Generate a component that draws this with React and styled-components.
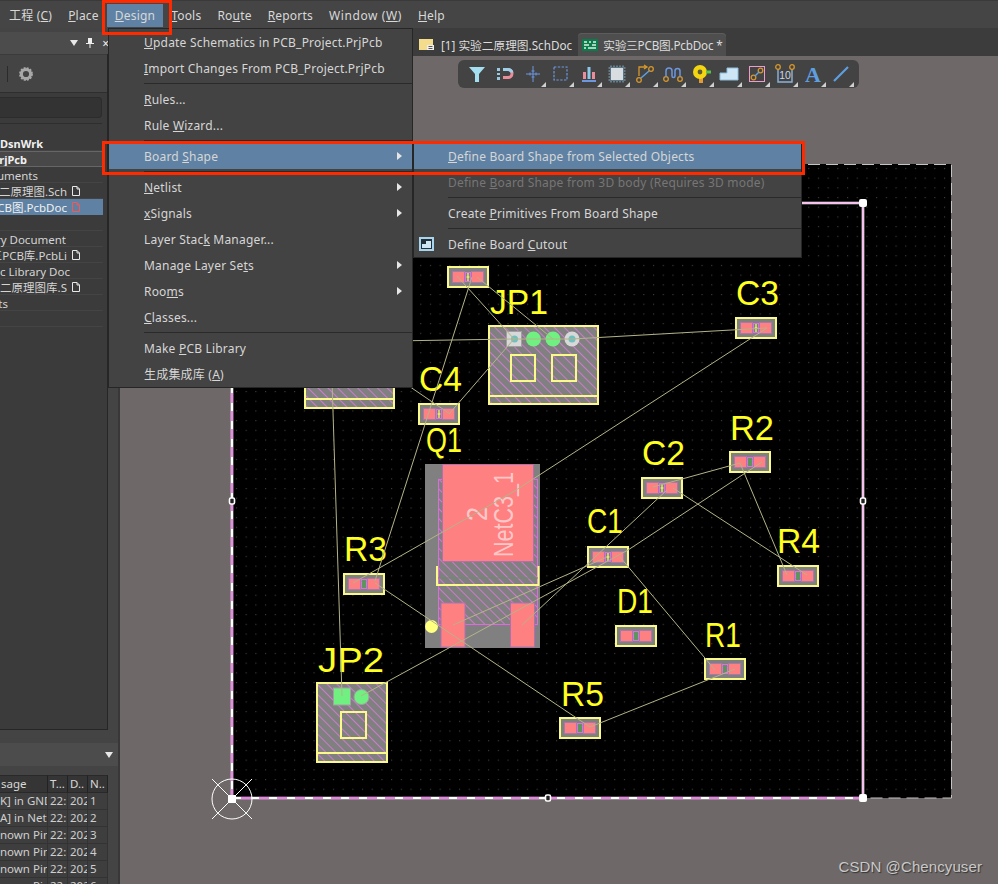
import React from "react";
import styled, { createGlobalStyle } from "styled-components";

const FONT = `"Noto Sans", "Noto Sans CJK SC", sans-serif`;
const BLUE = "#5f82a4";

const GlobalStyle = createGlobalStyle`
  html, body {
    margin: 0;
    padding: 0;
    background: #444;
  }
`;

const Page = styled.div`
  position: relative;
  width: 998px;
  height: 884px;
  overflow: hidden;
  display: flex;
  flex-direction: column;
  background: #444;
  color: #d8d8d8;
  font-family: ${FONT};
  font-size: 12px;
`;

const MenuBar = styled.div`
  height: 28px;
  flex: none;
  display: flex;
  align-items: flex-end;
  box-sizing: border-box;
  padding: 0 0 1px 1px;
  background: #454545;
  border-top: 1px solid #3a3a3a;
`;

const MenuTitle = styled.div`
  height: 23px;
  line-height: 24px;
  padding: 0 8px;
  letter-spacing: ${(p) => (p.$wide ? 0.6 : 0.2)}px;
  color: #d8d8d8;
  white-space: nowrap;
  background: ${(p) => (p.$active ? BLUE : "transparent")};
`;

const Body = styled.div`
  flex: 1;
  display: flex;
  min-height: 0;
`;

/* left panels */
const LeftColumn = styled.aside`
  width: 120px;
  flex: none;
  box-sizing: border-box;
  display: flex;
  flex-direction: column;
  padding-top: 4px;
  overflow: hidden;
  background: #444;
  border-right: 2px solid #383838;
`;

const PanelTitle = styled.div`
  height: 22px;
  flex: none;
  display: flex;
  align-items: center;
  justify-content: flex-end;
  gap: 8px;
  padding-right: 9px;
  background: #4c4c4c;
  color: #eee;
  overflow: hidden;
`;

const DownMark = styled.span`
  width: 0;
  height: 0;
  border-left: 4px solid transparent;
  border-right: 4px solid transparent;
  border-top: 6px solid #e8e8e8;
`;

const ProjectPanel = styled.div`
  height: 676px;
  flex: none;
  width: 108px;
  box-sizing: border-box;
  display: flex;
  flex-direction: column;
  background: #3b3b3b;
  border-right: 1px solid #262626;
  border-bottom: 1px solid #262626;
`;

const PanelTools = styled.div`
  height: 37px;
  flex: none;
  display: flex;
  align-items: center;
  gap: 11px;
  padding-left: 7px;
  background: #444;
  border-bottom: 1px solid #2e2e2e;
  margin-top: 1px;
`;

const ToolDivider = styled.span`
  width: 1px;
  height: 16px;
  background: #2b2b2b;
`;

const SearchField = styled.div`
  height: 21px;
  flex: none;
  width: 102px;
  margin-top: 4px;
  background: #333;
  border-radius: 0 4px 4px 0;
  border: 1px solid #2c2c2c;
  border-left: none;
  box-sizing: border-box;
`;

const PanelRule = styled.div`
  height: 1px;
  width: 102px;
  flex: none;
  margin: 5px 0 11px;
  background: #2e2e2e;
`;

const TreeRow = styled.div`
  height: 16px;
  width: 103px;
  flex: none;
  box-sizing: border-box;
  display: flex;
  align-items: center;
  justify-content: flex-end;
  gap: 5px;
  overflow: hidden;
  padding-right: ${(p) => p.$pad}px;
  font-size: ${(p) => (p.$bold ? 11 : 11.5)}px;
  font-weight: ${(p) => (p.$bold ? 700 : 400)};
  white-space: nowrap;
  color: ${(p) => (p.$selected || p.$bold ? "#f0f0f0" : "#d4d4d4")};
  background: ${(p) => (p.$selected ? BLUE : p.$focus ? "#484848" : "transparent")};
  border: ${(p) => (p.$focus ? "1px solid #666" : "none")};
  border-width: ${(p) => (p.$focus ? "1px 1px 1px 0" : "0")};
  box-shadow: ${(p) => (p.$selected || p.$focus ? "none" : "inset 0 -1px 0 #444")};
`;

const TreeText = styled.span`
  flex: none;
`;

const MessagesTitle = styled(PanelTitle)`
  margin-top: 13px;
  height: 23px;
  padding-right: 5px;
`;

const MessageTable = styled.div`
  margin-top: 9px;
  width: 108px;
  flex: none;
  display: grid;
  grid-template-columns: 48px 20px 20px 20px;
  grid-template-rows: 18px;
  grid-auto-rows: 17px;
  font-size: 11.5px;
  background: #3e3e3e;
`;

const HeadCell = styled.div`
  line-height: 16px;
  padding-left: ${(p) => p.$pad}px;
  box-sizing: border-box;
  overflow: hidden;
  white-space: nowrap;
  color: #d8d8d8;
  background: #353535;
  border-top: 1px solid #292929;
  border-bottom: 1px solid #292929;
  border-right: 1px solid #222;
`;

const Cell = styled.div`
  line-height: 16px;
  padding-left: ${(p) => p.$pad}px;
  box-sizing: border-box;
  overflow: hidden;
  white-space: nowrap;
  color: #cfcfcf;
  border-bottom: 1px solid #333;
  border-right: 1px solid #333;
`;

/* document area */
const Workspace = styled.main`
  flex: 1;
  min-width: 0;
  display: flex;
  flex-direction: column;
`;

const TabBar = styled.div`
  height: 28px;
  flex: none;
  display: flex;
  align-items: flex-end;
  gap: 1px;
  box-sizing: border-box;
  padding-left: 294px;
  background: #3c3c3c;
`;

const Tab = styled.div`
  height: 23px;
  display: flex;
  align-items: center;
  gap: ${(p) => (p.$active ? 5 : 7)}px;
  padding: 0 ${(p) => (p.$active ? 4 : 5)}px;
  white-space: nowrap;
  font-size: 11.7px;
  letter-spacing: ${(p) => (p.$active ? -0.2 : 0)}px;
  color: #dcdcdc;
  background: ${(p) => (p.$active ? "#4e4e4e" : "transparent")};
  border-radius: 4px 4px 0 0;
  box-shadow: ${(p) => (p.$active ? "inset 0 1px 0 #5c5c5c" : "none")};
`;

const Canvas = styled.div`
  position: relative;
  flex: 1;
  min-height: 0;
  background: #6e6968;
`;

const FloatingBar = styled.div`
  position: absolute;
  left: 338px;
  top: 4px;
  width: 401px;
  height: 28px;
  display: flex;
  justify-content: center;
  background: #434343;
  border-radius: 6px;
`;

const ToolButton = styled.div`
  position: relative;
  width: 28px;
  height: 28px;
  display: flex;
  align-items: center;
  justify-content: center;

  &::after {
    content: "";
    display: ${(p) => (p.$more ? "block" : "none")};
    position: absolute;
    right: 1px;
    bottom: 1px;
    border-left: 5px solid transparent;
    border-bottom: 5px solid #cfcfcf;
  }
`;

const BoardSvg = styled.svg`
  display: block;
`;

const Designator = styled.text`
  font-family: "Liberation Sans", sans-serif;
  font-size: 35px;
  fill: #ffff20;
`;

const PadText = styled.text`
  font-family: "Liberation Sans", sans-serif;
  fill: #ffc8c8;
`;

/* dropdown menus */
const Dropdown = styled.div`
  position: absolute;
  left: ${(p) => p.$left}px;
  top: ${(p) => p.$top}px;
  width: ${(p) => p.$width}px;
  box-sizing: border-box;
  background: #434343;
  border: 1px solid #262626;
  z-index: 5;
`;

const DropItem = styled.div`
  height: 26px;
  display: flex;
  align-items: center;
  white-space: nowrap;
  letter-spacing: 0.2px;
  color: ${(p) => (p.$disabled ? "#767676" : "#d6d6d6")};
  background: ${(p) => (p.$active ? BLUE : "transparent")};
`;

const IconSlot = styled.span`
  width: ${(p) => p.$width}px;
  flex: none;
  display: flex;
  padding-left: 5px;
  box-sizing: border-box;
`;

const ItemLabel = styled.span`
  flex: 1;
`;

const SubArrow = styled.span`
  margin-right: 10px;
  border-top: 4px solid transparent;
  border-bottom: 4px solid transparent;
  border-left: 5px solid #e6e6e6;
`;

const DropRule = styled.div`
  height: 5px;
  margin-left: ${(p) => p.$inset}px;
  display: flex;
  align-items: center;

  &::before {
    content: "";
    flex: 1;
    height: 1px;
    background: #2a2a2a;
  }
`;

const Callout = styled.div`
  position: absolute;
  left: ${(p) => p.$left}px;
  top: ${(p) => p.$top}px;
  width: ${(p) => p.$width}px;
  height: ${(p) => p.$height}px;
  box-sizing: border-box;
  border: 3px solid #ff2a00;
  z-index: 6;
`;

const Watermark = styled.div`
  position: absolute;
  right: 16px;
  bottom: 9px;
  font-family: "Liberation Sans", sans-serif;
  font-size: 15px;
  letter-spacing: 0.1px;
  color: #c9c9c9;
  text-shadow: 1px 1px 1px #333;
  z-index: 6;
`;

const FileIcon = ({ color = "#e8e8e8" }) => (
  <svg width="8" height="10" viewBox="0 0 8 10" fill="none" style={{ flex: "none" }}>
    <path d="M.5.5h4.5l2.5 2.5v6.5h-7z M5 .5v2.5h2.5" stroke={color} />
  </svg>
);

const Gear = () => (
  <svg width="14" height="14" viewBox="0 0 14 14">
    <circle cx="7" cy="7" r="4.6" fill="none" stroke="#a8a8a8" strokeWidth="3" />
    <circle cx="7" cy="7" r="6" fill="none" stroke="#a8a8a8" strokeWidth="1.8" strokeDasharray="2 1.14" />
  </svg>
);

const Pin = () => (
  <svg width="8" height="10" viewBox="0 0 8 10">
    <path d="M2 0h4v5h2v1H4.5v4h-1V6H0V5h2z" fill="#eee" />
  </svg>
);

const CutoutIcon = () => (
  <svg width="15" height="14" viewBox="0 0 15 14">
    <rect width="15" height="14" fill="#a9d4ee" />
    <rect x="2" y="2" width="11" height="10" fill="#23303a" />
    <path d="M3 11V7h4V4h5v7z" fill="#cfe6f5" />
  </svg>
);

const SchIcon = () => (
  <svg width="15" height="11" viewBox="0 0 15 11">
    <path d="M0 0h14v6l-1 5H0z" fill="#f3dc8c" />
    <path d="M8 6h7v5H8z" fill="#eee" />
    <path d="M9.5 7.5h4M9.5 9.5h4" stroke="#555" />
  </svg>
);

const PcbIcon = () => (
  <svg width="16" height="12" viewBox="0 0 16 12">
    <rect width="16" height="12" fill="#0c7a4a" />
    <path d="M2 3h3M7 3h2M11 3h3M2 6h5M10 6h4M2 9h2M6 9h8" stroke="#d7f3e4" strokeWidth="1.4" />
  </svg>
);

const Ring = ({ x, y }) => <circle cx={x} cy={y} r="2.3" fill="none" stroke="#d7962a" strokeWidth="1.3" />;

const TOOL_ICONS = [
  { more: false, art: <path d="M2 3h16l-6 7v8H8v-8z" fill="#a3dff0" /> },
  {
    more: false,
    art: (
      <>
        <path d="M8 4h5a5.5 5.5 0 0 1 0 11H8v-3h5a2.5 2.5 0 0 0 0-5H8z" fill="#e98d9a" />
        <path d="M8 4h5a5.5 5.5 0 0 1 5.4 4.5h-3A2.5 2.5 0 0 0 13 7H8z" fill="#9fd0ea" />
        <path d="M2 4h3v3H2zM2 9h3v2H2zM2 13h3v3H2z" fill="#9ac9e2" />
      </>
    ),
  },
  {
    more: true,
    art: <path d="M10 2v16M3 10h14M7 8.500v3M13 8.500v3M8.500 7h3M8.500 13h3" stroke="#6d97df" strokeWidth="1" fill="none" />,
  },
  {
    more: true,
    art: <rect x="3" y="3" width="13" height="13" fill="none" stroke="#6d97df" strokeWidth="1.2" strokeDasharray="2.4 1.4" />,
  },
  {
    more: true,
    art: (
      <>
        <path d="M4 8h3v7H4zM13 8h3v7h-3z" fill="#e98d9a" />
        <path d="M8.5 3h3v12h-3z" fill="#8cc8e8" />
        <path d="M3 17h14" stroke="#6d97df" strokeWidth="2" />
      </>
    ),
  },
  {
    more: true,
    art: (
      <>
        <path d="M4 1.5v17M7 1.5v17M10 1.5v17M13 1.5v17M16 1.5v17M1.5 4h17M1.5 7h17M1.5 10h17M1.5 13h17M1.5 16h17" stroke="#8ab4c8" strokeWidth="1" />
        <rect x="3.5" y="3.5" width="13" height="13" fill="#d8dde2" stroke="#5c7686" />
      </>
    ),
  },
  {
    more: true,
    art: (
      <>
        <Ring x={4} y={16} />
        <Ring x={16} y={5} />
        <path d="M6 14l8-7" stroke="#5f9fe0" strokeWidth="1.5" />
        <path d="M4 12V3h7M9 1l3 2-3 2" stroke="#d7962a" strokeWidth="1.3" fill="none" />
      </>
    ),
  },
  {
    more: true,
    art: (
      <>
        <Ring x={3} y={15} />
        <Ring x={17} y={15} />
        <path d="M3 13V7a3 3 0 0 1 6 0v5a1.5 1.5 0 0 0 3 0V7a2.5 2.5 0 0 1 5 0v6" stroke="#6d97df" strokeWidth="1.5" fill="none" />
      </>
    ),
  },
  {
    more: true,
    art: (
      <>
        <path d="M8 12h4v7H8z" fill="#e59a3a" />
        <circle cx="9" cy="8" r="7" fill="#f3d511" />
        <circle cx="9" cy="8" r="2.4" fill="#5b5b3a" />
        <path d="M15 6.5h5v3h-5z" fill="#56c24a" />
      </>
    ),
  },
  { more: true, art: <path d="M1 9h7V4h11v12H1z" fill="#cfe6f5" stroke="#8cc0e0" /> },
  {
    more: true,
    art: (
      <>
        <rect x="2.5" y="2.5" width="15" height="15" fill="none" stroke="#ec9ccf" />
        <Ring x={6.5} y={13.5} />
        <Ring x={13.5} y={6.5} />
        <path d="M8 12l4-4" stroke="#5f9fe0" strokeWidth="1.4" />
      </>
    ),
  },
  {
    more: true,
    art: (
      <>
        <path d="M3 5v13h14V5" fill="none" stroke="#8cb4dc" strokeWidth="1.4" />
        <Ring x={3} y={3} />
        <Ring x={17} y={3} />
        <text x="10" y="14.5" textAnchor="middle" fontFamily="Liberation Sans" fontSize="10.5" fill="#c8d8e8">10</text>
      </>
    ),
  },
  {
    more: true,
    art: <text x="10" y="18" textAnchor="middle" fontFamily="Liberation Serif" fontWeight="700" fontSize="22" fill="#5f9fe0">A</text>,
  },
  { more: true, art: <path d="M3 17L17 3" stroke="#5f9fe0" strokeWidth="2.2" /> },
];

const HATCH = "url(#hatch)";
const YELLOW = "#fafa88";

const SMALL_PARTS = [
  { x: 447, y: 266, mark: "y" },
  { x: 735, y: 317, mark: "y" },
  { x: 418, y: 403, mark: "y" },
  { x: 641, y: 477, mark: "y" },
  { x: 729, y: 451, mark: "g" },
  { x: 777, y: 565, mark: "g" },
  { x: 587, y: 546, mark: "y" },
  { x: 615, y: 625, mark: "g" },
  { x: 704, y: 658, mark: "g" },
  { x: 559, y: 717, mark: "g" },
  { x: 343, y: 573, mark: "g" },
];

const LABELS = [
  { text: "JP1", x: 490, y: 314, w: 58 },
  { text: "C3", x: 736, y: 305, w: 43 },
  { text: "C4", x: 419, y: 391, w: 43 },
  { text: "Q1", x: 426, y: 452, w: 36 },
  { text: "C2", x: 642, y: 465, w: 43 },
  { text: "R2", x: 730, y: 440, w: 44 },
  { text: "C1", x: 587, y: 533, w: 36 },
  { text: "R4", x: 777, y: 553, w: 43 },
  { text: "D1", x: 617, y: 613, w: 36 },
  { text: "R1", x: 705, y: 647, w: 36 },
  { text: "R3", x: 344, y: 561, w: 43 },
  { text: "R5", x: 561, y: 706, w: 43 },
  { text: "JP2", x: 318, y: 672, w: 66 },
];

const NETS = [
  [330, 342, 514, 339],
  [572, 339, 767, 328],
  [457, 276, 514, 339],
  [477, 277, 553, 339],
  [472, 277, 375, 581],
  [449, 414, 514, 339],
  [400, 380, 450, 414],
  [767, 328, 513, 492],
  [513, 492, 353, 583],
  [653, 487, 740, 463],
  [673, 488, 807, 575],
  [667, 490, 522, 625],
  [762, 462, 628, 550],
  [628, 550, 361, 696],
  [740, 463, 787, 575],
  [620, 557, 715, 670],
  [607, 557, 453, 625],
  [375, 583, 590, 727],
  [735, 669, 590, 727],
  [332, 380, 342, 696],
  [514, 339, 572, 339],
];

const SmallPart = ({ x, y, mark }) => (
  <g>
    <rect x={x + 1} y={y + 1} width="40" height="20" fill="#808080" stroke={YELLOW} strokeWidth="2" />
    <rect x={x + 5.5} y={y + 5.5} width="12" height="11" fill="#ff8080" stroke="#a878a8" />
    <rect x={x + 24.5} y={y + 5.5} width="12" height="11" fill="#ff8080" stroke="#a878a8" />
    <rect x={x + 18.5} y={y + 6.5} width="5" height="9" fill={mark === "y" ? "#808080" : "#6d8a6d"} stroke="#e070e0" />
    {mark === "y" ? (
      <path d={`M${x + 21} ${y + 7}v8M${x + 19.5} ${y + 11}h3`} stroke="#ffff60" strokeWidth="1.2" />
    ) : (
      <path d={`M${x + 19} ${y + 8}l4 6M${x + 23} ${y + 8}l-4 6`} stroke="#4fa04f" strokeWidth="1.2" />
    )}
  </g>
);

const Connector = ({ x, y, w, h, line }) => (
  <g>
    <rect x={x} y={y} width={w} height={h} fill="#808080" />
    <rect x={x} y={y} width={w} height={h} fill={HATCH} stroke={YELLOW} strokeWidth="2" />
    <path d={`M${x} ${line}h${w}`} stroke={YELLOW} strokeWidth="2" />
  </g>
);

const Handle = ({ x, y, solid }) =>
  solid ? (
    <rect x={x - 4} y={y - 4} width="8" height="8" rx="2" fill="#fff" />
  ) : (
    <rect x={x - 2.5} y={y - 3} width="5" height="6" rx="1.5" fill="#222" stroke="#fff" strokeWidth="1.6" />
  );

const Board = () => (
  <BoardSvg width="878" height="828" viewBox="120 56 878 828">
    <defs>
      <pattern id="grid" x="232" y="164" width="9.7" height="9.7" patternUnits="userSpaceOnUse">
        <rect x="4" y="4" width="1" height="1" fill="#505050" />
      </pattern>
      <pattern id="hatch" width="7" height="7" patternUnits="userSpaceOnUse" patternTransform="rotate(45)">
        <rect y="0" width="7" height="0.7" fill="#f078f0" />
      </pattern>
    </defs>

    <rect x="232" y="164" width="719" height="634" fill="#000" />
    <rect x="232" y="164" width="719" height="634" fill="url(#grid)" />
    <path d="M232 164.5H951.5V798H863" fill="none" stroke="#c4c4c4" strokeDasharray="12 6" />

    <Connector x={305} y={300} w={89} h={108} line={399} />

    <Connector x={489} y={326} w={109} h={78} line={396} />
    <rect x="511" y="355" width="24" height="26" fill="none" stroke={YELLOW} strokeWidth="2" />
    <rect x="552" y="355" width="24" height="26" fill="none" stroke={YELLOW} strokeWidth="2" />
    <rect x="506.500" y="331.500" width="15" height="15" fill="#d8d8d8" stroke="#a0a0a0" />
    <circle cx="514.500" cy="339" r="3.500" fill="#6fc0c0" />
    <circle cx="533.500" cy="339" r="7.500" fill="#70f080" />
    <circle cx="553" cy="339" r="7.500" fill="#70f080" />
    <circle cx="572" cy="339" r="7.500" fill="#d8d8d8" />
    <circle cx="572" cy="339" r="3.500" fill="#6fc0c0" />

    <Connector x={317} y={683} w={70} h={79} line={753} />
    <rect x="341" y="712" width="25" height="26" fill="none" stroke={YELLOW} strokeWidth="2" />
    <rect x="333.500" y="688" width="17" height="17" fill="#70f080" stroke="#a0a0a0" />
    <circle cx="361.500" cy="697" r="7.500" fill="#70f080" stroke="#a0a0a0" />

    <rect x="425" y="464" width="115" height="184" fill="#808080" />
    <rect x="438.500" y="479.500" width="99" height="145" fill={HATCH} stroke="#e068e0" />
    <rect x="442.500" y="464.500" width="91" height="97" fill="#ff8080" stroke="#b070b0" />
    <path d="M437 566V585H538.500V566" fill="none" stroke={YELLOW} strokeWidth="2" />
    <path d="M438 578H538" stroke="#6d8a6d" />
    <rect x="441" y="603" width="24" height="44" fill="#ff8080" stroke="#b070b0" />
    <rect x="510.500" y="603" width="24" height="44" fill="#ff8080" stroke="#b070b0" />
    <circle cx="431.500" cy="626.500" r="6.500" fill="#ffff80" />
    <PadText fontSize="28" textLength="85" lengthAdjust="spacingAndGlyphs" transform="translate(513 557) rotate(-90)">NetC3_1</PadText>
    <PadText fontSize="30" textLength="14" lengthAdjust="spacingAndGlyphs" transform="translate(487 521) rotate(-90)">2</PadText>

    {SMALL_PARTS.map((part) => (
      <SmallPart key={`${part.x}-${part.y}`} {...part} />
    ))}

    {LABELS.map((label) => (
      <Designator key={label.text} x={label.x} y={label.y} textLength={label.w} lengthAdjust="spacingAndGlyphs">
        {label.text}
      </Designator>
    ))}

    {NETS.map(([x1, y1, x2, y2]) => (
      <line key={`${x1}-${y1}-${x2}-${y2}`} x1={x1} y1={y1} x2={x2} y2={y2} stroke="#b4b488" />
    ))}

    <path d="M232 203H863V798H232Z" fill="none" stroke="#fff" strokeWidth="2.600" />
    <path d="M232 203H863V798" fill="none" stroke="#e888dc" />
    <path d="M863 798H232V203" fill="none" stroke="#f050e8" strokeWidth="1.4" strokeDasharray="10 8" />

    <Handle x={232} y={501} />
    <Handle x={548} y={798} />
    <Handle x={863} y={501} />
    <Handle x={863} y={203} solid />
    <Handle x={863} y={798} solid />

    <circle cx="232" cy="799" r="20" fill="none" stroke="#fff" />
    <path d="M212 779l40 40M252 779l-40 40" stroke="#fff" />
    <rect x="228" y="795" width="8" height="8" fill="#fff" />
  </BoardSvg>
);

const MENU_TITLES = [
  ["工程 (", "C", ")"],
  ["", "P", "lace"],
  ["", "D", "esign"],
  ["", "T", "ools"],
  ["Ro", "u", "te"],
  ["", "R", "eports"],
  ["Window (", "W", ")"],
  ["", "H", "elp"],
];

const DESIGN_ITEMS = [
  { parts: ["", "U", "pdate Schematics in PCB_Project.PrjPcb"] },
  { parts: ["", "I", "mport Changes From PCB_Project.PrjPcb"] },
  { rule: true },
  { parts: ["", "R", "ules..."] },
  { parts: ["Rule ", "W", "izard..."] },
  { rule: true },
  { parts: ["Board ", "S", "hape"], sub: true, active: true },
  { rule: true },
  { parts: ["", "N", "etlist"], sub: true },
  { parts: ["", "x", "Signals"], sub: true },
  { parts: ["Layer Stac", "k", " Manager..."] },
  { parts: ["Manage Layer Se", "t", "s"], sub: true },
  { parts: ["Roo", "m", "s"], sub: true },
  { parts: ["", "C", "lasses..."] },
  { rule: true },
  { parts: ["Make ", "P", "CB Library"] },
  { parts: ["生成集成库 (", "A", ")"] },
];

const SHAPE_ITEMS = [
  { parts: ["", "D", "efine Board Shape from Selected Objects"], active: true },
  { parts: ["Define ", "B", "oard Shape from 3D body (Requires 3D mode)"], disabled: true },
  { rule: true },
  { parts: ["Create ", "P", "rimitives From Board Shape"] },
  { rule: true },
  { parts: ["Define Board ", "C", "utout"], icon: <CutoutIcon /> },
];

const TREE_ROWS = [
  { text: ".DsnWrk", pad: 60, bold: true },
  { text: "PrjPcb", pad: 75, bold: true, focus: true },
  { text: "uments", pad: 65 },
  { text: "二原理图.Sch", pad: 23, file: "#e8e8e8" },
  { text: "CB图.PcbDoc", pad: 23, file: "#ef5a5a", selected: true },
  { text: "", pad: 0 },
  { text: "ry Document", pad: 37 },
  { text: "三PCB库.PcbLi", pad: 23, file: "#e8e8e8" },
  { text: "c Library Doc", pad: 33 },
  { text: "二原理图库.S", pad: 23, file: "#e8e8e8" },
  { text: "ts", pad: 95 },
  { text: "", pad: 0 },
];

const MESSAGES = [
  ["K] in GND", "22:", "202", "1"],
  ["A] in Netl", "22:", "202", "2"],
  ["nown Pin", "22:", "202", "3"],
  ["nown Pin", "22:", "202", "4"],
  ["nown Pin", "22:", "202", "5"],
  ["nown Pin", "22:", "202", "6"],
];

const Mnemonic = ({ parts }) => (
  <>
    {parts[0]}
    <u>{parts[1]}</u>
    {parts[2]}
  </>
);

const MenuList = ({ items, left, top, width, inset }) => (
  <Dropdown $left={left} $top={top} $width={width}>
    {items.map((item, i) =>
      item.rule ? (
        <DropRule key={i} $inset={inset} />
      ) : (
        <DropItem key={i} $active={item.active} $disabled={item.disabled}>
          <IconSlot $width={inset}>{item.icon}</IconSlot>
          <ItemLabel>
            <Mnemonic parts={item.parts} />
          </ItemLabel>
          {item.sub && <SubArrow />}
        </DropItem>
      )
    )}
  </Dropdown>
);

const App = () => (
  <Page>
    <GlobalStyle />
    <MenuBar>
      {MENU_TITLES.map((parts, i) => (
        <MenuTitle key={i} $active={i === 2} $wide={i === 6}>
          <Mnemonic parts={parts} />
        </MenuTitle>
      ))}
    </MenuBar>

    <Body>
      <LeftColumn>
        <PanelTitle>
          <DownMark />
          <Pin />
          <span>×</span>
        </PanelTitle>
        <ProjectPanel>
          <PanelTools>
            <ToolDivider />
            <Gear />
          </PanelTools>
          <SearchField />
          <PanelRule />
          {TREE_ROWS.map((row, i) => (
            <TreeRow key={i} $pad={row.pad} $bold={row.bold} $focus={row.focus} $selected={row.selected}>
              <TreeText>{row.text}</TreeText>
              {row.file && <FileIcon color={row.file} />}
            </TreeRow>
          ))}
        </ProjectPanel>
        <MessagesTitle>
          <DownMark />
        </MessagesTitle>
        <MessageTable>
          <HeadCell $pad={1}>sage</HeadCell>
          <HeadCell $pad={2}>T...</HeadCell>
          <HeadCell $pad={2}>D..</HeadCell>
          <HeadCell $pad={2}>N..</HeadCell>
          {MESSAGES.flatMap((row, r) =>
            row.map((value, c) => (
              <Cell key={`${r}-${c}`} $pad={c === 0 ? 0 : 2}>
                {value}
              </Cell>
            ))
          )}
        </MessageTable>
      </LeftColumn>

      <Workspace>
        <TabBar>
          <Tab>
            <SchIcon />
            [1] 实验二原理图.SchDoc
          </Tab>
          <Tab $active>
            <PcbIcon />
            实验三PCB图.PcbDoc *
          </Tab>
        </TabBar>
        <Canvas>
          <Board />
          <FloatingBar>
            {TOOL_ICONS.map((tool, i) => (
              <ToolButton key={i} $more={tool.more}>
                <svg width="20" height="20" viewBox="0 0 20 20">
                  {tool.art}
                </svg>
              </ToolButton>
            ))}
          </FloatingBar>
        </Canvas>
      </Workspace>
    </Body>

    <MenuList items={DESIGN_ITEMS} left={108} top={28} width={305} inset={35} />
    <MenuList items={SHAPE_ITEMS} left={413} top={142} width={389} inset={34} />
    <Callout $left={102} $top={0} $width={70} $height={35} />
    <Callout $left={102} $top={141} $width={703} $height={34} />
    <Watermark>CSDN @Chencyuser</Watermark>
  </Page>
);

export default App;
